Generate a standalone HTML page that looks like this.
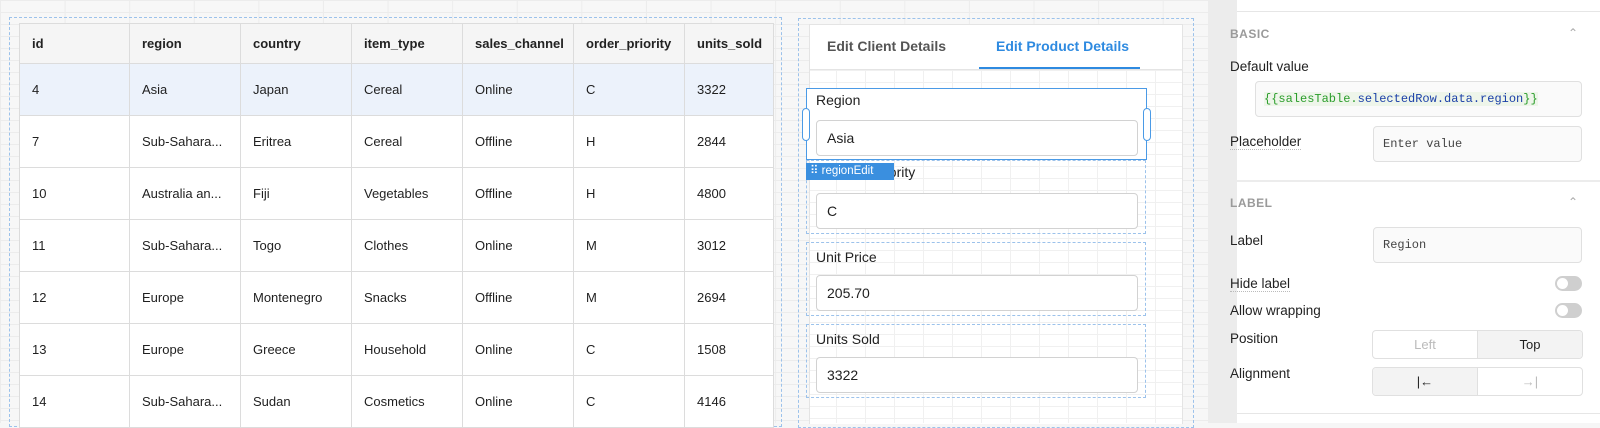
<!DOCTYPE html>
<html><head><style>
*{box-sizing:border-box;margin:0;padding:0}
body{width:1600px;height:423px;overflow:hidden;font-family:"Liberation Sans",sans-serif;background:#f6f6f6;position:relative;color:#1f1f1f}
.grid{position:absolute;left:0;top:0;width:1208px;height:423px;background-color:#f7f7f7;background-image:linear-gradient(#ececec 1px,transparent 1px),linear-gradient(90deg,#ececec 1px,transparent 1px);background-size:64.6px 12px}
.abs{position:absolute}
table{border-collapse:collapse;position:absolute;left:19px;top:23px;font-size:13px;background:#fff;table-layout:fixed}
td,th{border:1px solid #dcdcdc;text-align:left;padding-left:12px;font-weight:normal;white-space:nowrap;overflow:hidden}
th{height:40px;background:#f5f5f5;font-weight:600;color:#222}
td{height:52px}
tr.sel td{background:#ecf2fb}
.dash{border:1px dashed #9cc2eb}
.lab{font-size:14px;color:#222}
.inp{position:absolute;border:1px solid #d2d2d2;border-radius:4px;background:#fff;font-size:14px;padding-left:10px;display:flex;align-items:center}
.side{position:absolute;left:1237px;top:0;width:363px;height:423px;background:#fff}
.sh{font-size:12px;color:#9a9a9a;font-weight:bold;letter-spacing:.5px}
.sl{font-size:13.5px;color:#222}
.mono{font-family:"Liberation Mono",monospace;font-size:12px}
.sinp{position:absolute;border:1px solid #e0e0e0;border-radius:4px;background:#fafafa;display:flex;align-items:center;padding-left:9px}
.tog{position:absolute;width:27px;height:15px;border-radius:8px;background:#cfcfcf}
.tog:after{content:"";position:absolute;left:2px;top:2px;width:11px;height:11px;border-radius:50%;background:#fff}
.seg{position:absolute;display:flex;border:1px solid #e0e0e0;border-radius:4px;overflow:hidden;font-size:13px}
.seg div{flex:1;display:flex;align-items:center;justify-content:center}
</style></head><body>
<div class="grid"></div>
<div class="abs dash" style="left:9px;top:17px;width:773px;height:410px"></div>
<table>
<colgroup><col style="width:110px"><col style="width:111px"><col style="width:111px"><col style="width:111px"><col style="width:111px"><col style="width:111px"><col style="width:89px"></colgroup>
<tr><th>id</th><th>region</th><th>country</th><th>item_type</th><th>sales_channel</th><th>order_priority</th><th>units_sold</th></tr>
<tr class="sel"><td>4</td><td>Asia</td><td>Japan</td><td>Cereal</td><td>Online</td><td>C</td><td>3322</td></tr>
<tr><td>7</td><td>Sub-Sahara...</td><td>Eritrea</td><td>Cereal</td><td>Offline</td><td>H</td><td>2844</td></tr>
<tr><td>10</td><td>Australia an...</td><td>Fiji</td><td>Vegetables</td><td>Offline</td><td>H</td><td>4800</td></tr>
<tr><td>11</td><td>Sub-Sahara...</td><td>Togo</td><td>Clothes</td><td>Online</td><td>M</td><td>3012</td></tr>
<tr><td>12</td><td>Europe</td><td>Montenegro</td><td>Snacks</td><td>Offline</td><td>M</td><td>2694</td></tr>
<tr><td>13</td><td>Europe</td><td>Greece</td><td>Household</td><td>Online</td><td>C</td><td>1508</td></tr>
<tr><td>14</td><td>Sub-Sahara...</td><td>Sudan</td><td>Cosmetics</td><td>Online</td><td>C</td><td>4146</td></tr>
</table>

<div class="abs dash" style="left:798px;top:18px;width:396px;height:410px"></div>
<div class="abs" style="left:809px;top:24px;width:374px;height:400px;background:#fff;border:1px solid #e4e4e4;border-bottom:none"></div>
<div class="abs" style="left:810px;top:70px;width:372px;height:353px;background-color:#fff;background-image:linear-gradient(#f0f0f0 1px,transparent 1px),linear-gradient(90deg,#f0f0f0 1px,transparent 1px);background-size:29px 12px;background-position:-3px 0"></div>
<div class="abs" style="left:810px;top:69px;width:372px;height:1px;background:#e4e4e4"></div>
<div class="abs" style="left:827px;top:38px;font-size:14px;font-weight:600;color:#555">Edit Client Details</div>
<div class="abs" style="left:996px;top:38px;font-size:14px;font-weight:600;color:#2e8ae0">Edit Product Details</div>
<div class="abs" style="left:979px;top:67px;width:161px;height:2px;background:#2e8ae0"></div>

<div class="abs dash" style="left:806px;top:160px;width:340px;height:74px"></div>
<div class="abs lab" style="left:832px;top:164px">Order Priority</div>
<div class="inp" style="left:816px;top:193px;width:322px;height:36px">C</div>
<div class="abs" style="left:806px;top:88px;width:341px;height:72px;border:1px solid #4a9ae6;background:#fff"></div>
<div class="abs lab" style="left:816px;top:92px">Region</div>
<div class="inp" style="left:816px;top:120px;width:322px;height:36px">Asia</div>
<div class="abs" style="left:802px;top:108px;width:8px;height:33px;border:1px solid #4a9ae6;border-radius:4px;background:#fff"></div>
<div class="abs" style="left:1143px;top:108px;width:8px;height:33px;border:1px solid #4a9ae6;border-radius:4px;background:#fff"></div>
<div class="abs" style="left:806px;top:163px;width:88px;height:17px;background:#3a8fdf;color:#fff;font-size:11.5px;padding-left:4px;line-height:17px">⠿ regionEdit</div>

<div class="abs dash" style="left:806px;top:242px;width:340px;height:74px"></div>
<div class="abs lab" style="left:816px;top:249px">Unit Price</div>
<div class="inp" style="left:816px;top:275px;width:322px;height:36px">205.70</div>
<div class="abs dash" style="left:806px;top:324px;width:340px;height:74px"></div>
<div class="abs lab" style="left:816px;top:331px">Units Sold</div>
<div class="inp" style="left:816px;top:357px;width:322px;height:36px">3322</div>

<div class="abs" style="left:1208px;top:0;width:29px;height:423px;background:#ececec"></div>
<div class="side">
<div class="abs" style="left:0;top:11px;width:363px;height:1px;background:#e6e6e6"></div>
<div class="abs sh" style="left:-7px;top:27px">BASIC</div>
<div class="abs" style="left:331px;top:26px;color:#aaa;font-size:12px">⌃</div>
<div class="abs sl" style="left:-7px;top:59px">Default value</div>
<div class="sinp mono" style="left:18px;top:81px;width:327px;height:36px;padding-left:8px"><span style="background:#eef5ea;color:#2a9d2a">{{salesTable.<span style="color:#1b40a8">selectedRow.data.region</span>}}</span></div>
<div class="abs sl" style="left:-7px;top:134px;border-bottom:1px dotted #bbb">Placeholder</div>
<div class="sinp mono" style="left:136px;top:126px;width:209px;height:36px;color:#444">Enter value</div>
<div class="abs" style="left:0;top:180px;width:363px;height:2px;background:#ececec"></div>
<div class="abs sh" style="left:-7px;top:196px">LABEL</div>
<div class="abs" style="left:331px;top:195px;color:#aaa;font-size:12px">⌃</div>
<div class="abs sl" style="left:-7px;top:233px">Label</div>
<div class="sinp mono" style="left:136px;top:227px;width:209px;height:36px;color:#444">Region</div>
<div class="abs sl" style="left:-7px;top:276px;border-bottom:1px dotted #bbb">Hide label</div>
<div class="tog" style="left:318px;top:276px"></div>
<div class="abs sl" style="left:-7px;top:303px">Allow wrapping</div>
<div class="tog" style="left:318px;top:303px"></div>
<div class="abs sl" style="left:-7px;top:331px">Position</div>
<div class="seg" style="left:135px;top:330px;width:211px;height:29px"><div style="color:#bbb">Left</div><div style="background:#f3f3f3;border-left:1px solid #e0e0e0">Top</div></div>
<div class="abs sl" style="left:-7px;top:366px">Alignment</div>
<div class="seg" style="left:135px;top:367px;width:211px;height:29px"><div style="background:#f3f3f3;border-right:1px solid #e0e0e0">|←</div><div style="color:#bbb">→|</div></div>
<div class="abs" style="left:0;top:413px;width:363px;height:1px;background:#e6e6e6"></div>
</div>
</body></html>
